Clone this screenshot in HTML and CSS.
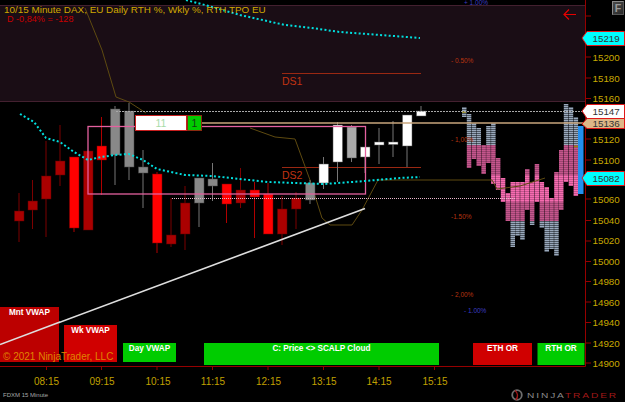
FILE: index.html
```html
<!DOCTYPE html>
<html lang="en">
<head>
<meta charset="utf-8">
<title>FDXM 15 Minute</title>
<link rel="stylesheet" href="styles.css">
</head>
<body>
<main class="chart">
<svg class="plot" width="625" height="402" viewBox="0 0 625 402">
  <defs>
    <pattern id="pk" width="120" height="2" patternUnits="userSpaceOnUse"><rect width="120" height="2" fill="#b04a80"/><rect width="120" height="1.3" fill="#f76cb0"/></pattern>
    <pattern id="gy" width="120" height="2" patternUnits="userSpaceOnUse"><rect width="120" height="2" fill="#3b434e"/><rect width="120" height="1.2" fill="#9aa9bc"/></pattern>
  </defs>

  <rect class="panel" x="0" y="5" width="585" height="96"/>
  <path class="panel-edge" d="M0 5.5H585M0 101.5H585"/>

  <path class="ds" d="M282 73.5H421M282 167.5H421"/>
  <text class="ds-text" x="282" y="84.5">DS1</text>
  <text class="ds-text" x="282" y="178.5">DS2</text>

  <g fill="url(#gy)">
    <rect x="462" y="107" width="4.500" height="10"/><rect x="466.800" y="114" width="4.500" height="31"/><rect x="471.700" y="123" width="4.500" height="22"/><rect x="476.500" y="128" width="4.500" height="17"/><rect x="486.200" y="126" width="4.500" height="19"/><rect x="491.100" y="123" width="4.500" height="22"/><rect x="563.800" y="104" width="4.500" height="41"/><rect x="568.700" y="107" width="4.500" height="38"/><rect x="573.600" y="117" width="4.500" height="28"/>
    <rect x="510.500" y="221" width="4.500" height="26"/><rect x="515.300" y="221" width="4.500" height="15"/><rect x="520.200" y="221" width="4.500" height="19"/><rect x="529.900" y="221" width="4.500" height="4"/><rect x="539.600" y="221" width="4.500" height="7"/><rect x="544.500" y="221" width="4.500" height="31"/><rect x="549.300" y="221" width="4.500" height="28"/><rect x="554.200" y="221" width="4.500" height="35"/>
  </g>
  <g fill="url(#pk)">
    <rect x="466.800" y="145" width="4.500" height="23"/><rect x="471.700" y="145" width="4.500" height="14"/><rect x="476.500" y="145" width="4.500" height="21"/><rect x="481.400" y="145" width="4.500" height="29"/><rect x="486.200" y="145" width="4.500" height="18"/><rect x="491.100" y="145" width="4.500" height="39"/><rect x="495.900" y="158" width="4.500" height="32"/><rect x="500.800" y="178" width="4.500" height="24"/><rect x="505.600" y="193" width="4.500" height="28"/><rect x="510.500" y="182" width="4.500" height="39"/><rect x="515.300" y="182" width="4.500" height="39"/><rect x="520.200" y="182" width="4.500" height="39"/><rect x="525" y="169" width="4.500" height="41"/><rect x="529.900" y="182" width="4.500" height="39"/><rect x="534.700" y="164" width="4.500" height="38"/><rect x="539.600" y="182" width="4.500" height="39"/><rect x="544.500" y="187" width="4.500" height="34"/><rect x="549.300" y="198" width="4.500" height="23"/><rect x="554.200" y="172" width="4.500" height="49"/><rect x="559" y="150" width="4.500" height="60"/><rect x="563.800" y="145" width="4.500" height="37"/><rect x="568.700" y="145" width="4.500" height="41"/><rect x="573.600" y="145" width="4.500" height="51"/>
  </g>
  <rect class="shade" x="466" y="145" width="112" height="30"/>
  <rect class="shade" x="466" y="202" width="112" height="19"/>
  <path class="olive-mark" d="M462 112H466M574 146.500H578"/>
  <rect class="blue-bar" x="578" y="126" width="5.500" height="68"/>

  <path class="olive" d="M85 8L102 50L116 97L129 102L146 113M250 128L275 137L295 139L310 180L322 218L330 225L352 225L362 210L378 180H492L497 189L520 186L545 178"/>

  <path class="wick-d" d="M19 193V242M32.500 180V229M46 141V237M60 125V186M88 151V230M171 198V247M185 186V250M240.500 168V208M282 196V245M296 192V229"/>
  <path class="wick-r" d="M74 157V232M101.500 117V195M157 172V253M226.500 184V223M254.500 182V238M268 183V234"/>
  <path class="wick-g" d="M115 106V185M129 103V180M143 150V208M199 178V227M212.500 163V201M310 180V204M351.500 125V162M379 128V164M393 121V157M407 115V167M323.500 157V189M337.500 122V182M365 147V173M421 106V116"/>

  <g class="dark">
    <rect x="14.500" y="211" width="9.500" height="10"/><rect x="28" y="201" width="9.500" height="9"/><rect x="41.500" y="176" width="9.500" height="23"/><rect x="55.500" y="161" width="9.500" height="14"/><rect x="83.500" y="151" width="9.500" height="79"/><rect x="166.500" y="235" width="9.500" height="9"/><rect x="180.500" y="203" width="9.500" height="31"/><rect x="236" y="190" width="9.500" height="13"/><rect x="277.500" y="209" width="9.500" height="25"/><rect x="291.500" y="198" width="9.500" height="11"/>
  </g>
  <g class="red">
    <rect x="69.500" y="157" width="9.500" height="71"/><rect x="97" y="146" width="9.500" height="14"/><rect x="152.500" y="174" width="9.500" height="69"/><rect x="222" y="184" width="9.500" height="20"/><rect x="250" y="190" width="9.500" height="7"/><rect x="263.500" y="194" width="9.500" height="40"/>
  </g>
  <g class="gray">
    <rect x="110.500" y="109" width="9.500" height="46"/><rect x="124.500" y="111" width="9.500" height="56"/><rect x="138.500" y="167" width="9.500" height="6"/><rect x="194.500" y="178" width="9.500" height="25"/><rect x="208" y="179" width="9.500" height="7"/><rect x="305.500" y="183" width="9.500" height="17"/><rect class="light" x="347" y="127" width="9.500" height="31"/>
  </g>
  <g class="white">
    <rect x="319" y="164" width="9.500" height="19"/><rect x="333" y="125" width="9.500" height="37"/><rect x="360.500" y="147" width="9.500" height="10"/><rect x="374.500" y="142" width="9.500" height="3"/><rect x="388.500" y="142" width="9.500" height="2.500"/><rect x="402.500" y="115" width="9.500" height="31"/><rect x="416.500" y="111" width="9.500" height="5"/>
  </g>

  <path class="level-dash" d="M116 111.500H585"/>
  <path class="level-dot" d="M172 198.500H515"/>
  <rect class="box" x="88" y="126.500" width="277.500" height="67.500"/>
  <path class="tan" d="M202 123H585"/>

  <path class="vwap" d="M20 114L34 122L46 138L60 142L74 152L88 160L101 157L115 155L129 154L143 160L157 169L185 175L212 176L240 179L268 182L296 183L324 184L338 183L365 181L400 178L420 177"/>
  <path class="vwap" d="M186 0L205 5L240 15L285 25L312 28L340 32L380 35L420 38"/>

  <path class="trend" d="M0 344.500L365 208.500"/>

  <text class="pct blue" x="464" y="5">+ 1.00%</text>
  <text class="pct rust" x="451" y="63">- 0.50%</text>
  <text class="pct rust" x="451" y="142">- 1,00%</text>
  <text class="pct rust" x="451" y="219">-1.50%</text>
  <text class="pct rust" x="451" y="297">- 2,00%</text>
  <text class="pct blue" x="464" y="313">- 1.00%</text>

  <rect class="tile-mnt" x="0" y="307" width="59" height="55"/>
  <g class="tile-red"><rect x="64" y="325" width="53" height="37"/><rect x="473" y="343" width="59" height="22"/></g>
  <g class="tile-green"><rect x="123" y="343" width="53" height="19"/><rect x="204" y="343" width="235" height="22"/><rect x="537.500" y="343" width="47" height="22"/></g>
  <path class="trend" d="M0 344.500L60 322"/>
  <text class="tile-text" x="29.500" y="315">Mnt VWAP</text>
  <text class="tile-text" x="90.500" y="333">Wk VWAP</text>
  <text class="tile-text" x="149.500" y="351">Day VWAP</text>
  <text class="tile-text" x="321.500" y="351">C: Price &lt;&gt; SCALP Cloud</text>
  <text class="tile-text" x="502.500" y="351">ETH OR</text>
  <text class="tile-text" x="561" y="351">RTH OR</text>

  <text class="copyright" x="3" y="360">© 2021 NinjaTrader, LLC</text>

  <path class="axis" d="M585.500 0V366.500H0"/>
  <path class="axis" d="M585 16H591M585 57H591M585 78H591M585 98.500H591M585 139H591M585 160H591M585 199H591M585 220.500H591M585 241H591M585 261.500H591M585 281.500H591M585 302H591M585 322.500H591M585 343H591M585 363H591M46.500 366V370M101.500 366V370M157 366V370M212.500 366V370M268 366V370M323.500 366V370M379 366V370M434.500 366V370"/>

  <g class="ylab">
    <text x="592.500" y="61">15200</text><text x="592.500" y="81.500">15180</text><text x="592.500" y="102">15160</text><text x="592.500" y="142.500">15120</text><text x="592.500" y="163.500">15100</text><text x="592.500" y="202.500">15060</text><text x="592.500" y="224">15040</text><text x="592.500" y="244">15020</text><text x="592.500" y="265">15000</text><text x="592.500" y="285">14980</text><text x="592.500" y="305.500">14960</text><text x="592.500" y="326">14940</text><text x="592.500" y="346.500">14920</text><text x="592.500" y="366.500">14900</text>
  </g>
  <g class="xlab">
    <text x="46.500" y="385">08:15</text><text x="102" y="385">09:15</text><text x="158" y="385">10:15</text><text x="213" y="385">11:15</text><text x="268.500" y="385">12:15</text><text x="324" y="385">13:15</text><text x="379" y="385">14:15</text><text x="435" y="385">15:15</text>
  </g>

  <path class="tag tag-cyan" d="M582 38L587 31.500H624.500V45.500H587Z"/>
  <path class="tag tag-white" d="M582 111L587 104.500H624.500V118.500H587Z"/>
  <path class="tag tag-tan" d="M582 124L587 118.500H624.500V128.500H587Z"/>
  <path class="tag tag-cyan" d="M582 178L587 171.500H624.500V185.500H587Z"/>
  <g class="tag-text">
    <text x="592.500" y="42">15219</text><text x="592.500" y="115">15147</text><text x="592.500" y="127">15136</text><text x="592.500" y="182">15082</text>
  </g>

  <path class="arrow" d="M576 14.500H564M569 9.500L564 14.500L569 19.500"/>
</svg>

<p class="title">10/15 Minute DAX, EU Daily RTH %, Wkly %, RTH TPO EU</p>
<p class="delta">D -0,84% = -128</p>
<div class="f-button">F</div>
<div class="trade-label"><span class="trade-qty">11</span><span class="trade-pos">1</span></div>
<p class="instrument">FDXM 15 Minute</p>
<div class="brand">
  <svg class="brand-mark" width="14" height="12" viewBox="0 0 14 12"><circle cx="7" cy="6" r="4.800" fill="none" stroke="#6e6e6e" stroke-width="1.800"/><path d="M5 1.500C8 4 8 8 6 11" fill="none" stroke="#a01818" stroke-width="1.600"/></svg>
  <span class="brand-name"><span class="brand-a">NINJA</span><span class="brand-b">TRADER</span></span>
</div>
</main>
</body>
</html>
```

FILE: styles.css
```css
* { box-sizing: border-box; }
html, body { margin: 0; padding: 0; background: #000; }
.chart { position: relative; width: 625px; height: 402px; overflow: hidden; background: #000; font-family: "Liberation Sans", Arial, sans-serif; }
.plot { position: absolute; left: 0; top: 0; display: block; }
.plot text { font-family: "Liberation Sans", Arial, sans-serif; }

.panel { fill: #1a0d15; }
.panel-edge { stroke: #43202f; stroke-width: 1; fill: none; }
.olive { fill: none; stroke: #5e4a10; stroke-width: 1; }
.olive-mark { fill: none; stroke: #9a8a10; stroke-width: 1.500; }
.ds { stroke: #9a2812; stroke-width: 1; fill: none; }
.ds-text { font-size: 10.500px; fill: #c23312; }
.shade { fill: #000; opacity: .2; }
.blue-bar { fill: #2290f0; }

.wick-d { stroke: #7c0000; stroke-width: 1; }
.wick-r { stroke: #b00000; stroke-width: 1; }
.wick-g { stroke: #777; stroke-width: 1; }
.dark rect { fill: #aa0000; stroke: #5a0000; stroke-width: .5; }
.red rect { fill: #ff0000; stroke: #7a0000; stroke-width: .5; }
.gray rect { fill: #888; stroke: #444; stroke-width: .5; }
.gray .light { fill: #aaa; }
.white rect { fill: #fff; stroke: #555; stroke-width: .5; }

.level-dash { stroke: #a8a8a8; stroke-width: 1; stroke-dasharray: 2 1; fill: none; }
.level-dot { stroke: #e8b8cc; stroke-width: 1; stroke-dasharray: 1 1; fill: none; }
.box { fill: none; stroke: #e4619f; stroke-width: 1.300; }
.tan { stroke: #c9a67c; stroke-width: 1.500; fill: none; }
.vwap { fill: none; stroke: #00dfdf; stroke-width: 2; stroke-dasharray: 2 2.300; }
.trend { fill: none; stroke: #dedede; stroke-width: 1.600; }

.pct { font-size: 6.500px; }
.blue { fill: #3c3cc0; }
.rust { fill: #b83410; }

.tile-mnt { fill: #bc0000; }
.tile-red rect { fill: #d00000; }
.tile-green rect { fill: #00cc00; }
.tile-text { font-size: 8.200px; font-weight: 700; fill: #fff; text-anchor: middle; }
.copyright { font-size: 10px; fill: #e08400; }

.axis { fill: none; stroke: #960000; stroke-width: 1; }
.ylab text { font-size: 9.800px; fill: #c8a800; }
.xlab text { font-size: 10px; fill: #c0a000; text-anchor: middle; }

.tag { stroke: #e01818; stroke-width: 1; }
.tag-cyan { fill: #00ffff; }
.tag-white { fill: #fff; }
.tag-tan { fill: #deb887; }
.tag-text text { font-size: 9.800px; fill: #333; }
.arrow { fill: none; stroke: #e80000; stroke-width: 1.200; }

.title, .delta, .instrument { position: absolute; margin: 0; white-space: nowrap; }
.title { left: 4px; top: 4px; font-size: 9.900px; line-height: 11px; color: #d0a800; }
.delta { left: 7px; top: 14px; font-size: 9.100px; line-height: 11px; color: #c80000; }
.instrument { left: 3px; top: 391px; font-size: 6px; line-height: 8px; color: #a8a8a8; }

.f-button { position: absolute; left: 612px; top: 1px; width: 12px; height: 14px; display: flex; align-items: center; justify-content: center; font-size: 10.500px; font-weight: 700; color: #9a9a9a; background: linear-gradient(135deg, #4a4a4a, #2a2a2a); border: 1px solid #8a8a8a; border-right-color: #555; border-bottom-color: #555; }

.trade-label { position: absolute; left: 135px; top: 115px; width: 67px; height: 16px; display: flex; }
.trade-qty { flex: 1; display: flex; align-items: center; justify-content: center; background: #fff; border: 1px solid #c81e1e; font-size: 10.500px; color: #a8dca8; }
.trade-pos { width: 15px; display: flex; align-items: center; justify-content: center; background: #00cc00; border: 1px solid #8a2a10; font-size: 10.500px; color: #143c14; }

.brand { position: absolute; left: 510px; top: 389px; height: 12px; display: flex; align-items: center; font-size: 7px; white-space: nowrap; }
.brand-mark { margin-right: 3px; }
.brand-name { display: inline-block; letter-spacing: 1.300px; transform: scaleX(1.450); transform-origin: left center; }
.brand-a { color: #8a8a8a; }
.brand-b { color: #a01818; }
```
